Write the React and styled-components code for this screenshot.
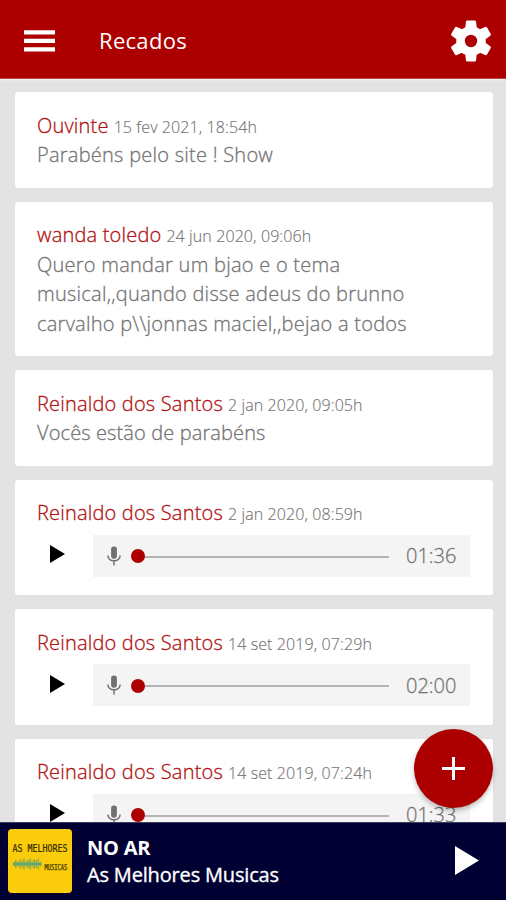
import React from "react";
import styled, { createGlobalStyle } from "styled-components";

const GlobalStyle = createGlobalStyle`
  * { box-sizing: border-box; }
  body { margin: 0; font-family: "Open Sans", "Noto Sans", sans-serif; }
  button { border: 0; padding: 0; background: none; font: inherit; cursor: pointer; }
  svg { display: block; }
`;

const Screen = styled.div`
  position: relative;
  display: flex;
  flex-direction: column;
  height: 900px;
  width: 506px;
  overflow: hidden;
  background: #e3e3e3;
`;

const TopBar = styled.header`
  flex: none;
  display: flex;
  align-items: center;
  height: 79px;
  padding: 3px 15px 0 24px;
  background: #ac0000;
  border-bottom: 1px solid #bd4a48;
  box-shadow: 0 1px 2px rgba(255, 250, 240, 0.8);
  color: #fff;
`;

const IconButton = styled.button`
  flex: none;
  color: inherit;
`;

const Title = styled.h1`
  flex: 1;
  margin: -2px 0 0 43px;
  font-size: 22px;
  line-height: 30px;
  font-weight: 400;
  letter-spacing: 0.3px;
`;

const Feed = styled.main`
  flex: 1;
  min-height: 0;
  overflow: hidden;
  display: flex;
  flex-direction: column;
  gap: 14px;
  padding: 13.3px 13.5px 0 14.5px;
`;

const Card = styled.article`
  flex: none;
  padding: 18.6px 22.5px 17.6px;
  background: #fff;
  border-radius: 3px;
  color: #747474;
  font-weight: 300;
  -webkit-text-stroke: 0.3px currentColor;
`;

const Heading = styled.div`
  display: flex;
  align-items: baseline;
  gap: 5px;
  height: 29.6px;
  line-height: 30px;
  white-space: nowrap;
`;

const Author = styled.span`
  color: #b01010;
  font-size: 20px;
  letter-spacing: 0.19px;
`;

const When = styled.time`
  font-size: 16px;
  letter-spacing: 0.1px;
  -webkit-text-stroke-width: 0.15px;
`;

const Message = styled.p`
  margin: 0;
  width: 390px;
  font-size: 20px;
  line-height: 29.6px;
  letter-spacing: ${(p) => p.$tracking || "0.25px"};
  white-space: pre-line;
`;

const Player = styled.div`
  display: flex;
  align-items: center;
  margin: 7.2px 0 18.1px;
  margin-bottom: 0.5px;
`;

const PlayButton = styled.button`
  flex: none;
  width: 56px;
  height: 42px;
  padding: 0 0 3px 13px;
`;

const Track = styled.div`
  flex: 1;
  display: flex;
  align-items: center;
  height: 42px;
  padding: 0 14px;
  background: #f4f4f4;
`;

const Slider = styled.div`
  flex: 1;
  display: flex;
  align-items: center;
  margin: 1px 17px 0 10px;
`;

const Knob = styled.span`
  width: 14px;
  height: 14px;
  border-radius: 50%;
  background: #ac0000;
`;

const Rail = styled.span`
  flex: 1;
  height: 2px;
  margin-top: 1px;
  background: #b4b4b4;
`;

const Duration = styled.span`
  width: 50px;
  font-size: 20px;
  line-height: 43px;
  white-space: nowrap;
`;

const AddButton = styled.button`
  position: absolute;
  right: 13px;
  bottom: 92px;
  width: 79px;
  height: 79px;
  display: flex;
  align-items: center;
  justify-content: center;
  border-radius: 50%;
  background: #ac0000;
  box-shadow: 0 3px 5px rgba(0, 0, 0, 0.25);
`;

const NowPlaying = styled.footer`
  flex: none;
  display: flex;
  align-items: center;
  height: 78px;
  padding: 0 27px 2px 8px;
  background: #000033;
  border-top: 1px solid #3c3c5c;
  color: #fff;
`;

const Cover = styled.div`
  flex: none;
  width: 64px;
  height: 64px;
  border-radius: 4px;
  background: #fbcc0c;
`;

const Station = styled.div`
  flex: 1;
  margin-left: 15px;
  font-size: 20px;
  line-height: 27px;
`;

const Live = styled.div`
  font-weight: 700;
  letter-spacing: -0.2px;
`;

const Show = styled.div`
  font-weight: 400;
  letter-spacing: -0.17px;
  -webkit-text-stroke: 0.35px #fff;
`;

const posts = [
  { author: "Ouvinte", when: "15 fev 2021, 18:54h", text: "Parabéns pelo site ! Show" },
  {
    author: "wanda toledo",
    when: "24 jun 2020, 09:06h",
    text: "Quero mandar um bjao e o tema\nmusical,,quando disse adeus do brunno\ncarvalho p\\\\jonnas maciel,,bejao a todos",
  },
  { author: "Reinaldo dos Santos", when: "2 jan 2020, 09:05h", text: "Vocês estão de parabéns", tracking: "0.12px" },
  { author: "Reinaldo dos Santos", when: "2 jan 2020, 08:59h", audio: "01:36" },
  { author: "Reinaldo dos Santos", when: "14 set 2019, 07:29h", audio: "02:00" },
  { author: "Reinaldo dos Santos", when: "14 set 2019, 07:24h", audio: "01:33" },
];

function MenuIcon() {
  return (
    <svg width="32" height="22" viewBox="0 0 32 22" fill="#fff">
      <path d="M0 .2h31v4.300H0zM0 8.700h31V13H0zM0 17.300h31v4.300H0z" />
    </svg>
  );
}

function GearIcon() {
  return (
    <svg width="40" height="42" viewBox="0 0 40 42">
      <g fill="#fff" stroke="#fff" strokeWidth="3" strokeLinejoin="round">
        <circle cx="20" cy="21" r="13.300" />
        {[0, 60, 120].map((angle) => (
          <path key={angle} transform={`rotate(${angle} 20 21)`} d="M16.400 1.900h7.200l.5 5v28.200l-.5 5h-7.200l-.5-5v-28.200z" />
        ))}
      </g>
      <circle cx="20" cy="21" r="6.200" fill="#ac0000" />
    </svg>
  );
}

function PlayIcon({ width, height, color }) {
  return (
    <svg width={width} height={height} viewBox="0 0 14 18" preserveAspectRatio="none" fill={color}>
      <path d="M0 0v18l14-9z" />
    </svg>
  );
}

function MicIcon() {
  return (
    <svg width="14" height="20" viewBox="0 0 14 20">
      <rect x="4.1" y="0.4" width="5.8" height="12.4" rx="2.7" fill="#707070" />
      <path d="M.9 9.600c0 3.200 2.700 5.200 6.100 5.200s6.100-2 6.100-5.200M7 14.800v4.600" fill="none" stroke="#707070" strokeWidth="1.5" />
    </svg>
  );
}

function CoverArt() {
  const bars = [4, 8, 5, 10, 7, 11, 6, 9, 11, 7, 10, 8, 11, 5];
  return (
    <svg width="64" height="64" viewBox="0 0 64 64">
      <text transform="translate(4.500 22.800) scale(1 1.200)" fontFamily="DejaVu Sans Mono, monospace" fontSize="8.3" fill="#3b3000" stroke="#3b3000" strokeWidth=".2">AS MELHORES</text>
      {bars.map((h, i) => (
        <rect key={i} x={5 + i * 2.05} y={35 - h / 2} width="1.5" height={h} fill={i % 3 ? "#88ae48" : "#b3a63c"} />
      ))}
      <path d="M5 35h28.500" stroke="#59a879" strokeWidth="2.500" />
      <text transform="translate(36.500 41.300) scale(1 1.500)" fontFamily="DejaVu Sans Mono, monospace" fontSize="5.4" fill="#4c3e00" stroke="#4c3e00" strokeWidth=".2">MUSICAS</text>
    </svg>
  );
}

function Post({ author, when, text, tracking, audio }) {
  return (
    <Card>
      <Heading>
        <Author>{author}</Author>
        <When>{when}</When>
      </Heading>
      {text && <Message $tracking={tracking}>{text}</Message>}
      {audio && (
        <Player>
          <PlayButton aria-label="Reproduzir"><PlayIcon width={15} height={18} color="#000" /></PlayButton>
          <Track>
            <MicIcon />
            <Slider><Knob /><Rail /></Slider>
            <Duration>{audio}</Duration>
          </Track>
        </Player>
      )}
    </Card>
  );
}

export default function App() {
  return (
    <Screen>
      <GlobalStyle />
      <TopBar>
        <IconButton aria-label="Menu"><MenuIcon /></IconButton>
        <Title>Recados</Title>
        <IconButton aria-label="Ajustes"><GearIcon /></IconButton>
      </TopBar>
      <Feed>
        {posts.map((post, i) => <Post key={i} {...post} />)}
      </Feed>
      <AddButton aria-label="Adicionar">
        <svg width="23" height="23" viewBox="0 0 23 23" stroke="#fff" strokeWidth="3"><path d="M11.500 0v23M0 11.500h23" /></svg>
      </AddButton>
      <NowPlaying>
        <Cover><CoverArt /></Cover>
        <Station>
          <Live>NO AR</Live>
          <Show>As Melhores Musicas</Show>
        </Station>
        <IconButton aria-label="Ouvir"><PlayIcon width={24} height={29} color="#fff" /></IconButton>
      </NowPlaying>
    </Screen>
  );
}
